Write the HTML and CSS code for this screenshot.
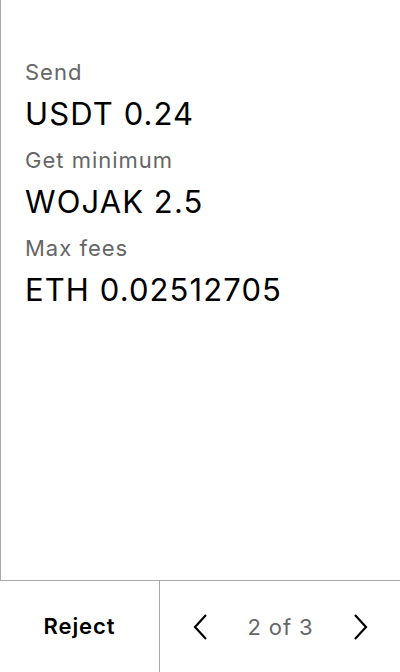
FILE: index.html
```html
<!DOCTYPE html>
<html>
<head>
<meta charset="utf-8">
<link rel="stylesheet" href="styles.css">
</head>
<body>
<div class="screen">
  <main class="content">
    <div class="label">Send</div>
    <div class="value">USDT 0.24</div>
    <div class="label">Get minimum</div>
    <div class="value">WOJAK 2.5</div>
    <div class="label">Max fees</div>
    <div class="value">ETH 0.02512705</div>
  </main>
  <footer class="footer">
    <button class="reject">Reject</button>
    <div class="pager">
      <svg class="chev" width="14" height="26" viewBox="0 0 14 26"><path d="M13 1 L2 13 L13 25" fill="none" stroke="#000" stroke-width="2.2"/></svg>
      <span class="count">2 of 3</span>
      <svg class="chev" width="14" height="26" viewBox="0 0 14 26"><path d="M1 1 L12 13 L1 25" fill="none" stroke="#000" stroke-width="2.2"/></svg>
    </div>
  </footer>
</div>
</body>
</html>
```
FILE: styles.css
```css
* { box-sizing: border-box; }
html, body { margin: 0; padding: 0; background: #fff; }
body { font-family: Inter, "Noto Sans", sans-serif; color: #000; }
.screen { width: 400px; height: 672px; display: flex; flex-direction: column; }
.content { flex: 1; border-left: 1px solid #a9a9a9; padding: 58px 24px 0 24px; display: flex; flex-direction: column; }
.label { font-size: 22px; line-height: 28px; letter-spacing: 1px; color: #666; margin-bottom: 10px; }
.value { font-size: 31px; line-height: 36px; letter-spacing: 1.1px; margin-bottom: 14px; }
.footer { height: 92px; border-top: 1px solid #a9a9a9; display: flex; }
.reject { width: 160px; border: none; border-right: 1px solid #a9a9a9; background: #fff; font-family: Inter, sans-serif; font-size: 22px; letter-spacing: 0.9px; font-weight: 600; color: #000; padding: 0 0 2px 0; }
.pager { flex: 1; display: flex; align-items: center; justify-content: space-between; padding: 0 32px 0 33px; }
.count { font-size: 22px; letter-spacing: 0.9px; color: #666; }
.chev { display: block; }
```
